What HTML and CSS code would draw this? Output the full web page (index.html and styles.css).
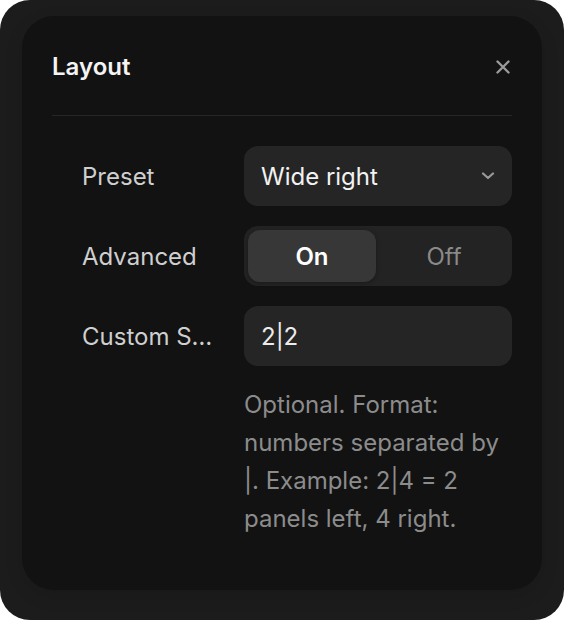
FILE: index.html
```html
<!DOCTYPE html>
<html lang="en">
<head>
<meta charset="utf-8">
<title>Layout</title>
<link rel="stylesheet" href="styles.css">
</head>
<body>
<div class="frame">
  <section class="panel">
    <header class="panel-header">
      <h1 class="panel-title">Layout</h1>
      <button class="close-btn" aria-label="Close">
        <svg width="14" height="14" viewBox="0 0 14 14"><path d="M1.5 1.5 L12.5 12.5 M12.5 1.5 L1.5 12.5" stroke="#9a9a9a" stroke-width="2.4" stroke-linecap="round" fill="none"/></svg>
      </button>
    </header>
    <div class="form">
      <div class="row">
        <span class="label">Preset</span>
        <div class="control select">
          <span class="select-value">Wide right</span>
          <svg class="chevron" width="14" height="8" viewBox="0 0 14 8"><path d="M2 1.5 L7 6 L12 1.5" stroke="#9a9a9a" stroke-width="2.2" stroke-linecap="round" stroke-linejoin="round" fill="none"/></svg>
        </div>
      </div>
      <div class="row">
        <span class="label">Advanced</span>
        <div class="control segmented">
          <span class="seg seg-active">On</span>
          <span class="seg">Off</span>
        </div>
      </div>
      <div class="row">
        <span class="label" title="Custom Split">Custom Split</span>
        <div class="control input">2|2</div>
      </div>
      <div class="row">
        <span></span>
        <p class="help">Optional. Format: numbers separated by |. Example: 2|4 = 2 panels left, 4 right.</p>
      </div>
    </div>
  </section>
</div>
</body>
</html>
```
FILE: styles.css
```css
html, body {
  margin: 0;
  padding: 0;
  background: #ffffff;
}
body {
  font-family: "Inter", "Noto Sans", sans-serif;
}
.frame {
  width: 564px;
  height: 620px;
  box-sizing: border-box;
  background: #1c1c1c;
  border-radius: 30px;
  padding: 16px 22px 30px;
}
.panel {
  height: 574px;
  box-sizing: border-box;
  background: #121212;
  border-radius: 32px;
  padding: 0 30px;
  box-shadow: 0 6px 18px rgba(0,0,0,0.12);
}
.panel-header {
  display: flex;
  align-items: center;
  justify-content: space-between;
  padding: 36px 0 33px;
  border-bottom: 1px solid #262626;
}
.panel-title {
  margin: 0;
  font-size: 24px;
  line-height: 30px;
  font-weight: 600;
  color: #f4f4f4;
}
.close-btn {
  background: none;
  border: 0;
  padding: 0;
  margin-right: 2px;
  width: 14px;
  height: 14px;
  display: flex;
}
.form {
  display: grid;
  grid-template-columns: 132px 268px;
  column-gap: 30px;
  row-gap: 20px;
  padding: 30px 0 0 30px;
}
.row {
  display: contents;
}
.label {
  align-self: center;
  font-size: 24px;
  color: #cfcfcf;
  white-space: nowrap;
  overflow: hidden;
  text-overflow: ellipsis;
}
.control {
  height: 60px;
  box-sizing: border-box;
  background: #252525;
  border-radius: 14px;
}
.select {
  display: flex;
  align-items: center;
  justify-content: space-between;
  padding: 0 17px 0 17px;
}
.select-value {
  font-size: 24px;
  color: #f2f2f2;
}
.segmented {
  display: grid;
  grid-template-columns: 1fr 1fr;
  gap: 4px;
  padding: 4px;
  background: #232323;
}
.seg {
  display: flex;
  align-items: center;
  justify-content: center;
  font-size: 24px;
  color: #8a8a8a;
  border-radius: 12px;
}
.seg-active {
  background: #373737;
  color: #ffffff;
  font-weight: 600;
  box-shadow: 0 1px 4px rgba(0,0,0,0.3);
}
.input {
  display: flex;
  align-items: center;
  padding: 0 17px;
  font-size: 24px;
  color: #ececec;
}
.help {
  margin: 0;
  font-size: 24px;
  line-height: 38px;
  color: #8c8c8c;
}
```
